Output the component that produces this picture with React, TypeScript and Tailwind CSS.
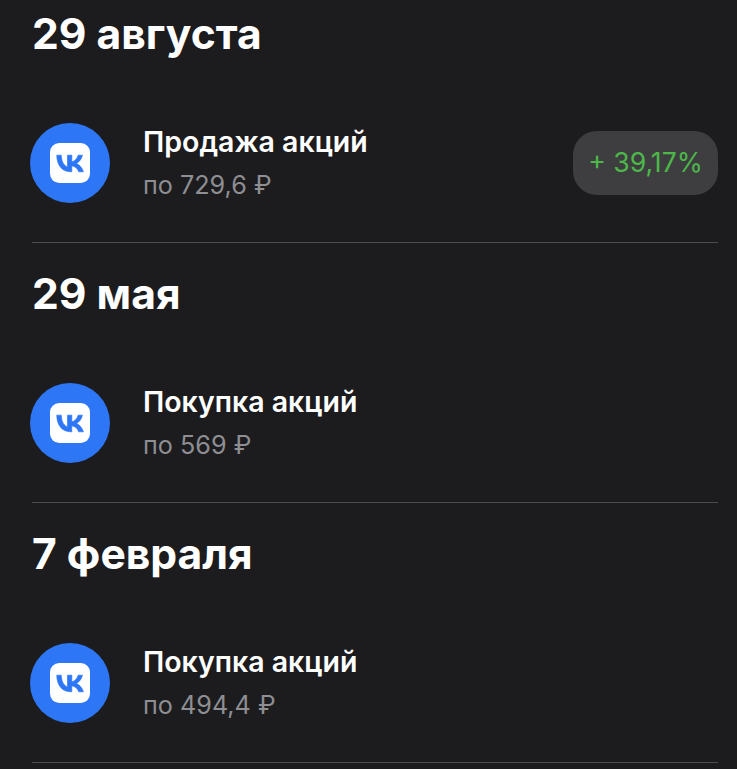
const operations = [
    { date: "29 августа", title: "Продажа акций", price: "по 729,6 ₽", change: "+ 39,17%" },
    { date: "29 мая", title: "Покупка акций", price: "по 569 ₽" },
    { date: "7 февраля", title: "Покупка акций", price: "по 494,4 ₽" },
];

const VkIcon = () => (
    <div className="flex h-20 w-20 shrink-0 items-center justify-center rounded-full bg-[#2d76f6]">
        <svg width="40" height="40" viewBox="0 0 48 48">
            <rect width="48" height="48" rx="11" fill="#ffffff" />
            <path
                fill="#2d76f6"
                stroke="#2d76f6"
                strokeWidth="0.8"
                d="M25.54 34.58c-10.94 0-17.18-7.5-17.44-19.98h5.48c.18 9.16 4.22 13.04 7.42 13.84V14.6h5.16v7.9c3.16-.34 6.48-3.94 7.6-7.9h5.16c-.86 4.88-4.46 8.48-7.02 9.96 2.56 1.2 6.66 4.34 8.22 10.02h-5.68c-1.22-3.8-4.26-6.74-8.28-7.14v7.14h-.62z"
            />
        </svg>
    </div>
);

const App = () => {
    return (
        <div className="h-[769px] overflow-hidden bg-[#1c1c1e] pl-8 pr-[19px] pt-[10px] font-['Inter',sans-serif]">
            {operations.map((op, index) => (
                <div key={index} className={index > 0 ? "pt-[27px]" : ""}>
                    <h2 className="h-12 text-[42.6px] leading-[48px] font-bold text-white">{op.date}</h2>
                    <div className="mt-[65px] -ml-0.5 flex h-20 items-center">
                        <VkIcon />
                        <div className="ml-[33px] flex-1">
                            <div className="text-[28.5px] leading-[32px] font-semibold text-white">{op.title}</div>
                            <div className="mt-3 text-[25.2px] leading-[30px] text-[#8e8e93]">{op.price}</div>
                        </div>
                        {op.change && (
                            <div className="flex h-16 w-[145px] items-center justify-center rounded-[24px] bg-[#3e3e40] text-[26.6px] text-[#4cb84a]">
                                {op.change}
                            </div>
                        )}
                    </div>
                    <div className="mt-[39px] h-px bg-[#4c4c4e]" />
                </div>
            ))}
        </div>
    );
};

export default App;
